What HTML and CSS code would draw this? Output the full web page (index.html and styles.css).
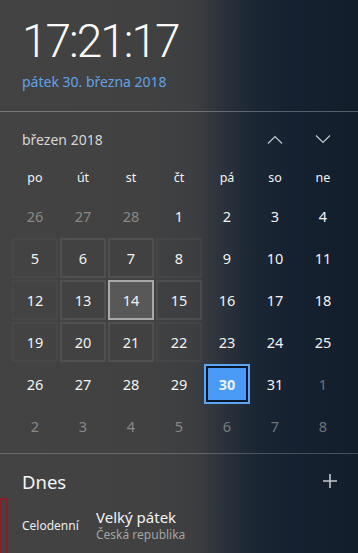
FILE: index.html
```html
<html lang="cs">
<head>
    <meta charset="UTF-8" />
    <title>Datum a čas</title>
    <link rel="stylesheet" href="styles.css">
</head>
<body>
    <div class="flyout">
        <header class="clock">
            <div class="time">17:21:17</div>
            <div class="date">pátek 30. března 2018</div>
        </header>
        <section class="calendar">
            <div class="month-bar">
                <span class="month-name">březen 2018</span>
                <span class="spacer"></span>
                <button class="nav-btn" aria-label="Předchozí měsíc">
                    <svg width="16" height="9" viewBox="0 0 16 9"><path d="M1 8.5 L8 1.5 L15 8.5" fill="none" stroke="#c4c8cd" stroke-width="1.2"/></svg>
                </button>
                <button class="nav-btn" aria-label="Další měsíc">
                    <svg width="16" height="9" viewBox="0 0 16 9"><path d="M1 0.5 L8 7.5 L15 0.5" fill="none" stroke="#c4c8cd" stroke-width="1.2"/></svg>
                </button>
            </div>
            <div class="weekdays">
                <span>po</span><span>út</span><span>st</span><span>čt</span><span>pá</span><span>so</span><span>ne</span>
            </div>
            <div class="days">
                <div class="day other">26</div>
                <div class="day other">27</div>
                <div class="day other">28</div>
                <div class="day">1</div>
                <div class="day">2</div>
                <div class="day">3</div>
                <div class="day">4</div>

                <div class="day glow-far">5</div>
                <div class="day glow">6</div>
                <div class="day glow">7</div>
                <div class="day glow-far">8</div>
                <div class="day">9</div>
                <div class="day">10</div>
                <div class="day">11</div>

                <div class="day glow-far">12</div>
                <div class="day glow">13</div>
                <div class="day hover">14</div>
                <div class="day glow">15</div>
                <div class="day">16</div>
                <div class="day">17</div>
                <div class="day">18</div>

                <div class="day glow-far">19</div>
                <div class="day glow">20</div>
                <div class="day glow">21</div>
                <div class="day glow-far">22</div>
                <div class="day">23</div>
                <div class="day">24</div>
                <div class="day">25</div>

                <div class="day">26</div>
                <div class="day">27</div>
                <div class="day">28</div>
                <div class="day">29</div>
                <div class="day today">30</div>
                <div class="day">31</div>
                <div class="day other">1</div>

                <div class="day other">2</div>
                <div class="day other">3</div>
                <div class="day other">4</div>
                <div class="day other">5</div>
                <div class="day other">6</div>
                <div class="day other">7</div>
                <div class="day other">8</div>
            </div>
        </section>
        <section class="agenda">
            <div class="agenda-head">
                <span class="agenda-title">Dnes</span>
                <button class="add-btn" aria-label="Přidat událost">
                    <svg width="16" height="16" viewBox="0 0 16 16"><path d="M8 1 V15 M1 8 H15" fill="none" stroke="#c4c8cd" stroke-width="1.6"/></svg>
                </button>
            </div>
            <div class="event">
                <div class="event-color"></div>
                <div class="event-when">Celodenní</div>
                <div class="event-info">
                    <div class="event-title">Velký pátek</div>
                    <div class="event-where">Česká republika</div>
                </div>
            </div>
        </section>
    </div>
</body>
</html>
```

FILE: styles.css
```css
body {
    margin: 0;
    padding: 0;
    font-family: "Noto Sans", "Open Sans", sans-serif;
    color: #f2f2f2;
    background-color: #2b2f35;
    overflow: hidden;
}
.flyout {
    width: 358px;
    height: 553px;
    overflow: hidden;
    background: linear-gradient(90deg, #434343 0, #414141 150px, #3c3e41 195px, #2a313b 225px, #1b2634 255px, #152130 295px, #131e2b 358px);
}
.clock {
    padding: 14px 0 19px 22px;
    border-bottom: 1px solid rgba(255,255,255,0.28);
}
.time {
    font-family: Roboto, "Open Sans", sans-serif;
    font-weight: 300;
    font-size: 46px;
    line-height: 54px;
    letter-spacing: -2px;
    color: #fafafa;
}
.date {
    margin-top: 4px;
    font-size: 14px;
    line-height: 20px;
    color: #63a1e4;
}
.calendar {
    padding: 0 12px 7px 12px;
    border-bottom: 1px solid rgba(255,255,255,0.22);
}
.month-bar {
    display: flex;
    align-items: center;
    height: 54px;
    gap: 2px;
}
.month-name {
    padding-left: 10px;
    font-size: 14px;
    color: #d6d6d6;
}
.spacer {
    flex: 1;
}
.nav-btn, .add-btn {
    background: none;
    border: none;
    padding: 0;
    cursor: pointer;
    display: flex;
    align-items: center;
    justify-content: center;
}
.nav-btn {
    width: 46px;
    height: 40px;
}
.weekdays {
    display: grid;
    grid-template-columns: repeat(7, 46px);
    column-gap: 2px;
    height: 24px;
    line-height: 24px;
    padding-bottom: 6px;
    font-size: 12.5px;
    text-align: center;
}
.days {
    display: grid;
    grid-template-columns: repeat(7, 46px);
    grid-auto-rows: 40px;
    gap: 2px;
}
.day {
    display: flex;
    align-items: center;
    justify-content: center;
    box-sizing: border-box;
    border: 2px solid transparent;
    font-size: 14.5px;
    color: #f2f2f2;
}
.day.other {
    color: rgba(255,255,255,0.38);
}
.day.glow {
    border-color: rgba(255,255,255,0.08);
}
.day.glow-far {
    border-color: rgba(255,255,255,0.03);
}
.day.hover {
    border-color: #a9a9a9;
    background-color: #585858;
}
.day.today {
    border-color: #5ea4ee;
    background-color: #4a9bf6;
    box-shadow: inset 0 0 0 2px #0b1831;
    font-weight: bold;
    color: #eaf2ff;
}
.agenda-head {
    display: flex;
    align-items: center;
    padding: 15px 20px 0 22px;
    height: 26px;
}
.agenda-title {
    flex: 1;
    font-size: 18.5px;
    line-height: 26px;
    color: #f4f4f4;
}
.add-btn {
    width: 16px;
    height: 16px;
    margin-top: -3px;
}
.event {
    display: flex;
    margin-top: 3px;
    height: 60px;
}
.event-color {
    width: 5px;
    border: 2px solid #8a1d27;
    border-left-width: 1px;
    border-bottom: none;
}
.event-when {
    width: 74px;
    padding: 20px 0 0 14px;
    font-size: 12px;
    line-height: 16px;
    color: #ececec;
}
.event-title {
    padding-top: 9px;
    font-size: 15px;
    line-height: 20px;
    color: #f4f4f4;
}
.event-where {
    font-size: 12px;
    line-height: 16px;
    color: #a4a4a4;
}
```
